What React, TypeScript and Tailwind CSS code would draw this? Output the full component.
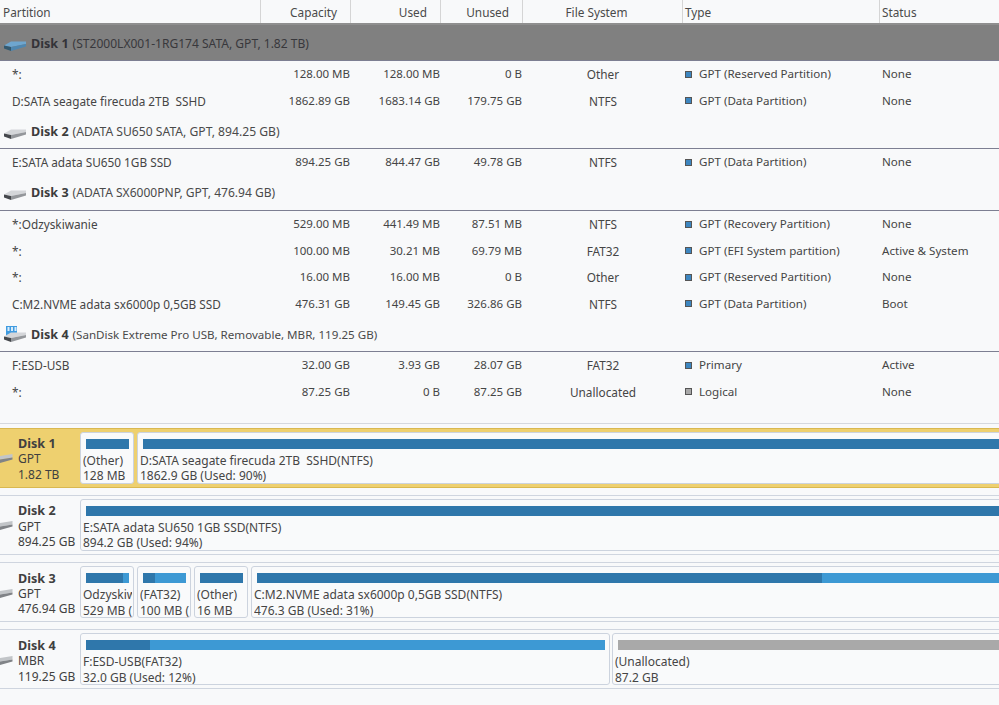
const font = { fontFamily: '"Noto Sans", "DejaVu Sans", sans-serif' };

const cols = "grid grid-cols-[261px_90px_90px_82px_160px_197px_119px]";

type Row = [string, string, string, string, string, string, string];
type Disk = {
  name: string;
  info: string;
  infoClass: string;
  pad: string;
  usb?: boolean;
  blue?: boolean;
  selected?: boolean;
  rows: Row[];
};

const disks: Disk[] = [
  {
    name: "Disk 1",
    info: "(ST2000LX001-1RG174 SATA, GPT, 1.82 TB)",
    infoClass: "text-[12.05px]",
    pad: "pt-[3px]",
    blue: true,
    selected: true,
    rows: [
      ["*:", "128.00 MB", "128.00 MB", "0 B", "Other", "GPT (Reserved Partition)", "None"],
      ["D:SATA seagate firecuda 2TB\u00a0 SSHD", "1862.89 GB", "1683.14 GB", "179.75 GB", "NTFS", "GPT (Data Partition)", "None"],
    ],
  },
  {
    name: "Disk 2",
    info: "(ADATA SU650 SATA, GPT, 894.25 GB)",
    infoClass: "text-[12.15px]",
    pad: "pt-[2px]",
    rows: [["E:SATA adata SU650 1GB SSD", "894.25 GB", "844.47 GB", "49.78 GB", "NTFS", "GPT (Data Partition)", "None"]],
  },
  {
    name: "Disk 3",
    info: "(ADATA SX6000PNP, GPT, 476.94 GB)",
    infoClass: "text-[12.05px]",
    pad: "pt-[2px]",
    rows: [
      ["*:Odzyskiwanie", "529.00 MB", "441.49 MB", "87.51 MB", "NTFS", "GPT (Recovery Partition)", "None"],
      ["*:", "100.00 MB", "30.21 MB", "69.79 MB", "FAT32", "GPT (EFI System partition)", "Active & System"],
      ["*:", "16.00 MB", "16.00 MB", "0 B", "Other", "GPT (Reserved Partition)", "None"],
      ["C:M2.NVME adata sx6000p 0,5GB SSD", "476.31 GB", "149.45 GB", "326.86 GB", "NTFS", "GPT (Data Partition)", "Boot"],
    ],
  },
  {
    name: "Disk 4",
    info: "(SanDisk Extreme Pro USB, Removable, MBR, 119.25 GB)",
    infoClass: "text-[11.6px]",
    pad: "pt-[4px]",
    usb: true,
    rows: [
      ["F:ESD-USB", "32.00 GB", "3.93 GB", "28.07 GB", "FAT32", "Primary", "Active"],
      ["*:", "87.25 GB", "0 B", "87.25 GB", "Unallocated", "Logical", "None"],
    ],
  },
];

function DriveIcon({ blue, usb }: { blue?: boolean; usb?: boolean }) {
  const top = blue ? "#6ea6cf" : "#d4d6d9";
  const side = blue ? "#33596f" : "#45484c";
  const front = blue ? "#4f87b0" : "#94979b";
  return (
    <svg width="24" height="18" viewBox="0 0 24 18" className="shrink-0">
      {usb && (
        <g>
          <rect x="3" y="0" width="11" height="10" fill="#3f9be0" />
          <rect x="4.5" y="1" width="2" height="4" fill="#d7ecfb" />
          <rect x="8" y="1" width="2" height="4" fill="#d7ecfb" />
          <rect x="11.5" y="1" width="2" height="4" fill="#d7ecfb" />
        </g>
      )}
      <path d="M1 10.5 L8 6.5 H23 L23 9 L8 12 Z" fill={top} />
      <path d="M1 10.5 L8 12 V16 L1 13.5 Z" fill={side} />
      <path d="M8 12 L23 9 V11.5 L8 16 Z" fill={front} />
    </svg>
  );
}

function MapDriveIcon() {
  return (
    <svg width="13" height="14" viewBox="0 0 13 14" className="shrink-0">
      <path d="M0 4 L12.5 2 V5.5 L0 7.5 Z" fill="#c2c5c8" />
      <path d="M0 7.5 L12.5 5.5 V7.5 L0 11 Z" fill="#808387" />
    </svg>
  );
}

function DiskHeader({ d }: { d: Disk }) {
  return (
    <div
      className={`h-[35.5px] flex items-center pl-[3px] ${d.pad} border-b border-[#7d7f92] ${d.selected ? "bg-[#808080]" : ""}`}
    >
      <DriveIcon blue={d.blue} usb={d.usb} />
      <span className={`ml-[4px] font-bold text-[12.6px] ${d.selected ? "text-[#333338]" : "text-[#3c3c3c]"}`}>{d.name}</span>
      <span className={`ml-[4px] ${d.infoClass} ${d.selected ? "text-[#38383c]" : "text-[#4a4a4a]"}`}>{d.info}</span>
    </div>
  );
}

function PartRow({ r }: { r: Row }) {
  const grey = r[4] === "Unallocated";
  return (
    <div className={`${cols} h-[26.4px] pt-[1px] items-center text-[#454545]`}>
      <div className="pl-[12px] whitespace-nowrap text-[11.8px]">{r[0]}</div>
      <div className="text-right pr-[1px] text-[11.5px]">{r[1]}</div>
      <div className="text-right pr-[1px] text-[11.5px]">{r[2]}</div>
      <div className="text-right pr-[1px] text-[11.5px]">{r[3]}</div>
      <div className="text-center text-[11.8px]">{r[4]}</div>
      <div className="flex items-center pl-[2px]">
        <span className={`w-[7px] h-[7px] border border-[#555] ${grey ? "bg-[#a8a8a8]" : "bg-[#3d86c0]"}`} />
        <span className="ml-[7px] whitespace-nowrap text-[11.6px]">{r[5]}</span>
      </div>
      <div className="pl-[2px] whitespace-nowrap text-[11.6px]">{r[6]}</div>
    </div>
  );
}

function Part({
  width,
  label,
  sub,
  dark,
  kind = "blue",
}: {
  width: string;
  label: string;
  sub: string;
  dark?: string;
  kind?: "blue" | "grey";
}) {
  return (
    <div className={`${width} shrink-0 h-full rounded-[3px] border border-[#ccd3de] bg-[#f9fafb] pl-[2px] pr-[1px] pt-[6px] overflow-hidden`}>
      <div className={`ml-[3px] mr-[3px] h-[10px] flex ${kind === "grey" ? "bg-[#a9a9a9]" : "bg-[#3d99d4]"}`}>
        {dark && <div className={`${dark} h-full bg-[#2f77ab]`} />}
      </div>
      <div className="mt-[4px] leading-[15.5px] whitespace-nowrap overflow-hidden">{label}</div>
      <div className="leading-[15.5px] whitespace-nowrap overflow-hidden">{sub}</div>
    </div>
  );
}

function MapCard({
  name,
  scheme,
  size,
  selected,
  children,
}: {
  name: string;
  scheme: string;
  size: string;
  selected?: boolean;
  children: React.ReactNode;
}) {
  return (
    <div
      className={`h-[60px] flex items-center border-y ${
        selected ? "bg-[#eed06f] border-[#d9b850]" : "border-[#cfd5df]"
      }`}
    >
      <div className="w-[80px] shrink-0 flex items-center text-[#404040] pt-[3px]">
        <MapDriveIcon />
        <div className="ml-[5px] leading-[15.4px] whitespace-nowrap">
          <div className="font-bold text-[12.6px]">{name}</div>
          <div>{scheme}</div>
          <div>{size}</div>
        </div>
      </div>
      <div className="flex-1 flex gap-[3px] h-[52px] text-[#454545] overflow-hidden">{children}</div>
    </div>
  );
}

export default function App() {
  return (
    <div
      className="w-[999px] h-[705px] overflow-hidden bg-[#f8f9fa] text-[12px] leading-[16px] text-[#454545]"
      style={font}
    >
      <div className={`${cols} h-[25px] items-center border-b-2 border-[#8f8f8f] text-[#4a4a4a] text-[11.8px]`}>
        <div className="pl-[3px] pt-[1px] h-full flex items-center border-r border-[#d5d5d5]">Partition</div>
        <div className="pr-[13px] pt-[1px] h-full flex items-center justify-end border-r border-[#d5d5d5]">Capacity</div>
        <div className="pr-[13px] pt-[1px] h-full flex items-center justify-end border-r border-[#d5d5d5]">Used</div>
        <div className="pr-[13px] pt-[1px] h-full flex items-center justify-end border-r border-[#d5d5d5]">Unused</div>
        <div className="pr-[12px] pt-[1px] h-full flex items-center justify-center border-r border-[#d5d5d5]">File System</div>
        <div className="pl-[2px] pt-[1px] h-full flex items-center border-r border-[#d5d5d5]">Type</div>
        <div className="pl-[2px] pt-[1px] h-full flex items-center">Status</div>
      </div>

      {disks.map((d) => (
        <div key={d.name}>
          <DiskHeader d={d} />
          {d.rows.map((r, i) => (
            <PartRow key={i} r={r} />
          ))}
        </div>
      ))}

      <div className="mt-[18px] border-t border-[#d5d8de] pt-[4px] flex flex-col gap-[7.3px]">
        <MapCard name="Disk 1" scheme="GPT" size="1.82 TB" selected>
          <Part width="w-[54px]" label="(Other)" sub="128 MB" dark="w-full" />
          <Part width="w-[1000px]" label={"D:SATA seagate firecuda 2TB\u00a0 SSHD(NTFS)"} sub="1862.9 GB (Used: 90%)" dark="w-full" />
        </MapCard>
        <MapCard name="Disk 2" scheme="GPT" size="894.25 GB">
          <Part width="w-[1000px]" label="E:SATA adata SU650 1GB SSD(NTFS)" sub="894.2 GB (Used: 94%)" dark="w-full" />
        </MapCard>
        <MapCard name="Disk 3" scheme="GPT" size="476.94 GB">
          <Part width="w-[54px]" label="Odzyskiwanie" sub="529 MB (NTFS)" dark="w-[37px]" />
          <Part width="w-[54px]" label="(FAT32)" sub="100 MB (Used: 30%)" dark="w-[12px]" />
          <Part width="w-[54px]" label="(Other)" sub="16 MB" dark="w-full" />
          <Part width="w-[1000px]" label="C:M2.NVME adata sx6000p 0,5GB SSD(NTFS)" sub="476.3 GB (Used: 31%)" dark="w-[565px]" />
        </MapCard>
        <MapCard name="Disk 4" scheme="MBR" size="119.25 GB">
          <div className="flex gap-[2px] h-full">
            <Part width="w-[530px]" label="F:ESD-USB(FAT32)" sub="32.0 GB (Used: 12%)" dark="w-[64px]" />
            <Part width="w-[1000px]" label="(Unallocated)" sub="87.2 GB" kind="grey" />
          </div>
        </MapCard>
      </div>
    </div>
  );
}
